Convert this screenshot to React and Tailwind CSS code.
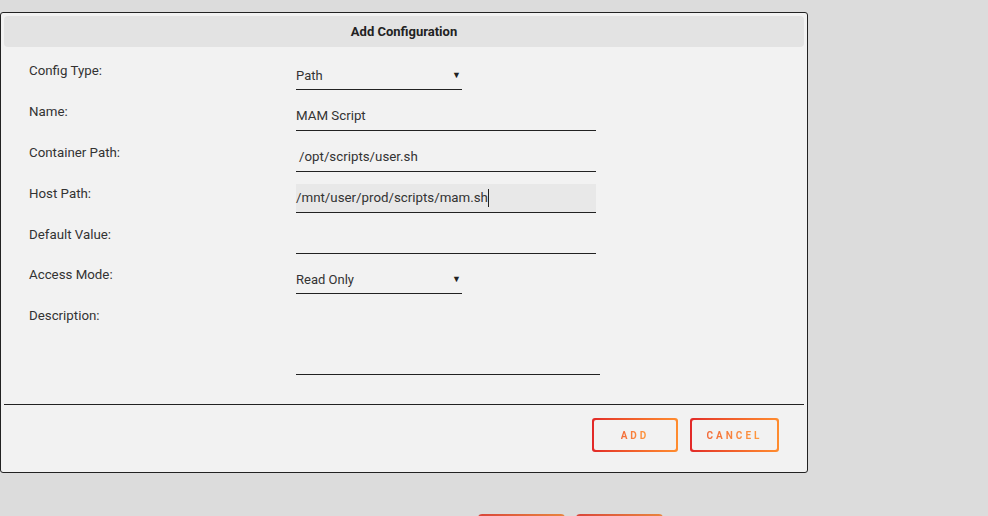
import React from "react";

const font = { fontFamily: "Roboto, 'Liberation Sans', sans-serif" };

const Row = ({ label, children, gap = "mb-[12px]" }) => (
  <div className={`flex items-start ${gap}`}>
    <div className="w-[267px] shrink-0 h-[20px] leading-[20px] text-[13.3px] text-[#333]">{label}</div>
    {children}
  </div>
);

const TextField = ({ value, active, indent }) => (
  <div
    className={`w-[300px] h-[29px] border-b border-[#222] flex items-center text-[13.3px] text-[#333] ${
      active ? "bg-[#e8e8e8]" : ""
    } ${indent ? "pl-[3px]" : ""}`}
  >
    <span>{value}</span>
    {active && <span className="inline-block w-px h-[18px] bg-[#222]" />}
  </div>
);

const SelectField = ({ value }) => (
  <div className="w-[166px] h-[29px] border-b border-[#222] flex items-center justify-between pt-px text-[13px] text-[#333]">
    <span>{value}</span>
    <span className="text-[9px] leading-none text-[#222] pr-[1px]">▼</span>
  </div>
);

const GradientButton = ({ label, width }) => (
  <div className={`${width} h-[34px] rounded-[3px] p-[2px] bg-gradient-to-r from-[#e22828] to-[#ff8c2f]`}>
    <div className="w-full h-full rounded-[2px] bg-[#f2f2f2] flex items-center justify-center">
      <span className="text-[10px] font-bold tracking-[3px] bg-gradient-to-r from-[#f26b3a] to-[#ff9a3c] bg-clip-text text-transparent">
        {label}
      </span>
    </div>
  </div>
);

export default function App() {
  return (
    <div className="w-[988px] h-[516px] overflow-hidden bg-[#dcdcdc]" style={font}>
      <div className="pt-[12px]">
        <div className="w-[808px] h-[461px] border border-[#222] rounded-[3px] bg-[#f2f2f2] p-[3px] flex flex-col">
          <div className="h-[31px] rounded-[4px] bg-[#e3e3e3] flex items-center justify-center text-[13px] font-bold text-[#222]">
            Add Configuration
          </div>
          <div className="pl-[25px] pt-[14px]">
            <Row label="Config Type:">
              <SelectField value="Path" />
            </Row>
            <Row label="Name:">
              <TextField value="MAM Script" />
            </Row>
            <Row label="Container Path:">
              <TextField value="/opt/scripts/user.sh" indent />
            </Row>
            <Row label="Host Path:">
              <TextField value="/mnt/user/prod/scripts/mam.sh" active />
            </Row>
            <Row label="Default Value:" gap="mb-[11px]">
              <TextField value="" />
            </Row>
            <Row label="Access Mode:">
              <SelectField value="Read Only" />
            </Row>
            <div className="flex items-start">
              <div className="w-[267px] shrink-0 h-[20px] leading-[20px] text-[13.3px] text-[#333]">Description:</div>
              <div className="w-[304px] h-[68px] mt-[1px] border-b border-[#222]" />
            </div>
          </div>
          <div className="mt-[29px] border-t border-[#222]" />
          <div className="flex justify-end gap-[12px] pr-[25px] pt-[13px]">
            <GradientButton label="ADD" width="w-[86px]" />
            <GradientButton label="CANCEL" width="w-[89px]" />
          </div>
        </div>
        <div className="flex gap-[11px] pl-[478px] mt-[41px]">
          <div className="w-[87px] h-[20px] rounded-[4px] bg-gradient-to-r from-[#d9453a] to-[#e8843e]" />
          <div className="w-[87px] h-[20px] rounded-[4px] bg-gradient-to-r from-[#d9453a] to-[#e8843e]" />
        </div>
      </div>
    </div>
  );
}
